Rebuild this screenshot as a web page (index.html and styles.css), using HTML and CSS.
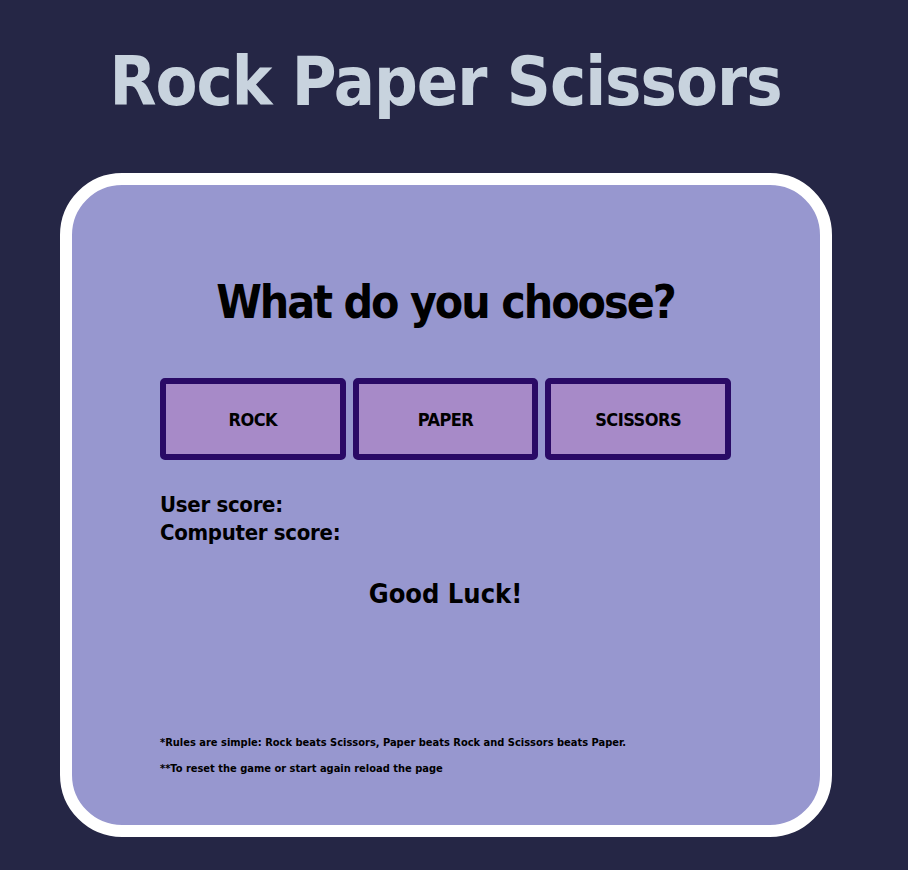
FILE: index.html
```html
<!DOCTYPE html>
<html lang="en">
<head>
<meta charset="utf-8">
<title>Rock Paper Scissors</title>
<link rel="stylesheet" href="styles.css">
</head>
<body>
<h1 class="title">Rock Paper Scissors</h1>
<main class="card">
  <h2 class="question">What do you choose?</h2>
  <div class="choices">
    <button class="choice">ROCK</button>
    <button class="choice">PAPER</button>
    <button class="choice">SCISSORS</button>
  </div>
  <div class="scores">
    <p class="score">User score:</p>
    <p class="score">Computer score:</p>
  </div>
  <p class="result">Good Luck!</p>
  <div class="rules">
    <p class="rule">*Rules are simple: Rock beats Scissors, Paper beats Rock and Scissors beats Paper.</p>
    <p class="rule">**To reset the game or start again reload the page</p>
  </div>
</main>
</body>
</html>
```
FILE: styles.css
```css
html, body {
  margin: 0;
  padding: 0;
}
body {
  background: #252645;
  font-family: "DejaVu Sans Condensed", "Liberation Sans", sans-serif;
  font-weight: bold;
  width: 908px;
  height: 870px;
  overflow: hidden;
}
.title {
  margin: 0;
  padding: 40px 17px 0 0;
  height: 173px;
  box-sizing: border-box;
  text-align: center;
  color: #c8d3de;
  font-size: 68px;
  letter-spacing: -1px;
  line-height: 84px;
}
.card {
  margin-left: 60px;
  width: 772px;
  height: 664px;
  box-sizing: border-box;
  border: 12px solid #ffffff;
  border-radius: 62px;
  background: #9797cf;
  padding: 0 89px 0 88px;
  display: flex;
  flex-direction: column;
}
.question {
  margin: 87px 0 0;
  text-align: center;
  font-size: 46px;
  letter-spacing: -2px;
  line-height: 60px;
  color: #000;
}
.choices {
  margin-top: 46px;
  display: flex;
  gap: 7px;
}
.choice {
  flex: 1;
  height: 82px;
  border: 6px solid #2a0a66;
  border-radius: 5px;
  background: #a78ac8;
  font-family: inherit;
  font-weight: bold;
  font-size: 18px;
  letter-spacing: -0.5px;
  color: #000;
  padding: 0;
}
.scores {
  margin-top: 31px;
}
.score {
  margin: 0;
  font-size: 22px;
  letter-spacing: -0.3px;
  line-height: 28px;
  color: #000;
}
.result {
  margin: 30px 0 0;
  text-align: center;
  font-size: 27px;
  line-height: 34px;
  color: #000;
}
.rules {
  margin-top: 125px;
}
.rule {
  margin: 0 0 12px;
  font-size: 11px;
  line-height: 14px;
  color: #000;
}
```
